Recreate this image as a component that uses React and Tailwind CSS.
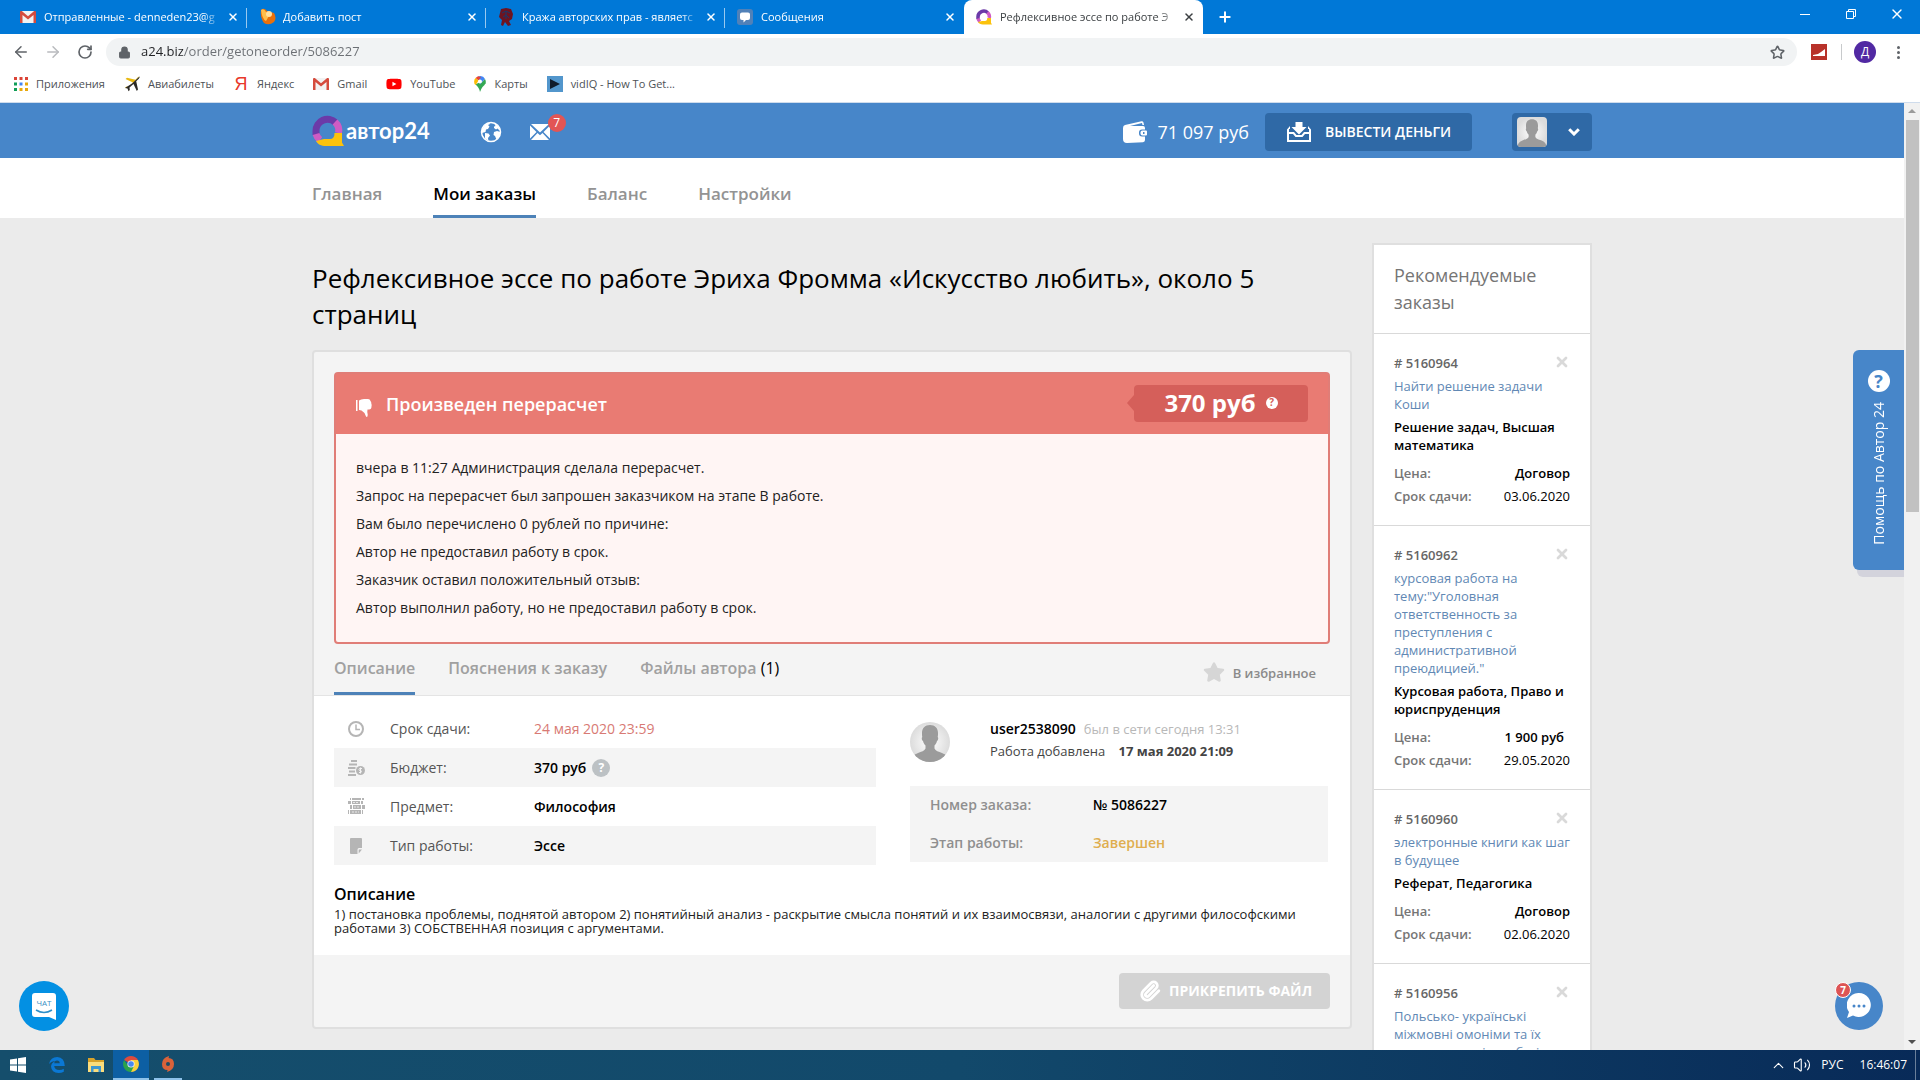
import { useState } from "react";
import { ArrowLeft, ArrowRight, RotateCw, Lock, Star, X, Plus, Paperclip, ChevronUp, Volume2 } from "lucide-react";
import { FaStar, FaYoutube } from "react-icons/fa";

/* ---------- Icons ---------- */

const Avatar = ({ className }) => (
  <svg viewBox="0 0 40 40" className={className} aria-hidden="true">
    <defs>
      <radialGradient id="avatarBg">
        <stop offset="0" stopColor="#fff" />
        <stop offset="1" stopColor="#dcdcdc" />
      </radialGradient>
    </defs>
    <rect width="40" height="40" fill="url(#avatarBg)" />
    <path fill="#9b9b9b" d="M20 3c5 0 8 3 8 8 0 2 0 3-.3 4 1 .6.6 3.500-.8 4.200-.5 2-1.400 3.300-2.400 4.300v3c1 2.500 4 3 7.500 4.500 4 1.700 6.500 3 7.500 9h-39c1-6 3.500-7.300 7.500-9 3.500-1.500 6.500-2 7.500-4.500v-3c-1-1-1.900-2.300-2.400-4.300-1.400-.7-1.800-3.600-.8-4.200-.3-1-.3-2-.3-4 0-5 3-8 8-8z" />
  </svg>
);

const LogoMark = ({ className }) => (
  <svg viewBox="0 0 32 32" className={className} aria-hidden="true">
    <path fill="none" stroke="#6b3aa8" strokeWidth="7" d="M4 20V16A11.500 11.500 0 0 1 23.500 7.500" />
    <path fill="none" stroke="#cf5cc4" strokeWidth="7" d="M23 7A11.500 11.500 0 0 1 26.500 18M4 19A12 12 0 0 0 8 25" />
    <path fill="#fbc20d" d="M22.500 18H30v9.500l2 3.500H14C9 31 5.500 29 4 26l8-2h6c3 0 4.500-2 4.500-6z" />
  </svg>
);

const GmailIcon = ({ className }) => (
  <svg viewBox="0 0 16 16" className={className} aria-hidden="true">
    <rect x="1" y="2" width="14" height="12" rx="1" fill="#f2f2f2" />
    <path fill="#d54b3d" d="M0 3q0-1 1-1h.800L8 7.200 14.200 2H15q1 0 1 1v11h-2.500V6L8 10.500 2.500 6v8H0z" />
  </svg>
);

const PlaneIcon = ({ className }) => (
  <svg viewBox="0 0 16 16" className={className} aria-hidden="true">
    <path fill="#e8b80e" d="M15.500.5L5 11 2.500 10.500 1 12l3 0L9 6.500 1.500 3 3 1.800l8.500 2L14 1z" />
    <path fill="#2c2a26" d="M15.500.5Q16 1.500 14.800 2.800L12.200 5.200 14 13.500 12.800 15 9.500 8 5.500 11.500 5.800 14 4.500 15.300 3.500 12.500 1 12 8 7.500z" />
  </svg>
);

const GlobeIcon = ({ className }) => (
  <svg viewBox="0 0 22 22" className={className} aria-hidden="true">
    <circle cx="11" cy="11" r="9.500" fill="none" stroke="currentColor" strokeWidth="1.500" />
    <path fill="currentColor" d="M2 8l3-4 4-2.500 1 1.500-2 1 1.500 1.500L8 8 6 8.500 5.500 11 2 12zM5 12l3.500.5 1.500 2-2 2.500.5 3L5 17.500zM14 2l4 3 2.500 4-1 .5-2-2-1.500 1-2-1.500V5.500l1.500-.5zM14 11l3-1 3.500 1-1 4.500-3 3-1.500-3.500L13.500 14z" />
  </svg>
);

const MailIcon = ({ className }) => (
  <svg viewBox="0 0 20 16" className={className} aria-hidden="true">
    <path fill="currentColor" d="M1 0h18l-9 8.500zM0 1.500L6.500 8 0 14.500zM20 1.500V14.500L13.500 8zM7.500 9l2.500 2.200L12.500 9 19 16H1z" />
  </svg>
);

const WalletIcon = ({ className }) => (
  <svg viewBox="0 0 24 22" className={className} aria-hidden="true">
    <path fill="currentColor" d="M2 4L18.500.2Q20 0 20.500 1.500L21 4h-1.500l-.5-2L7 5H20q2 0 2 2v1.500h-3q-3 0-3 3v1q0 3 3 3h3V19q0 2-2 2.200L4 22q-4 0-4-4V7q0-2.500 2-3z" />
    <path fill="currentColor" d="M19.500 9.500H23q1 0 1 1v3q0 1-1 1h-3.500q-2 0-2-2v-1q0-2 2-2zm.5 1.500v2h1.500v-2z" />
  </svg>
);

const WithdrawIcon = ({ className }) => (
  <svg viewBox="0 0 24 20" className={className} aria-hidden="true">
    <path fill="currentColor" d="M8.500 0h7v5h4L12 12.500 4.500 5h4zM0 7.500L3 4v3H2v3h5l2.500 3h5L17 10h5V7h-1V4l3 3.500V20H0zM2 12v6h20v-6h-4l-2.500 3h-7L6 12z" />
  </svg>
);

const ThumbDownIcon = ({ className }) => (
  <svg viewBox="0 0 16 18" className={className} aria-hidden="true">
    <path fill="currentColor" d="M0 1h1.500v11H0zM3 1.500Q5 0 8 0h4q2 0 2.500 2 1 1 .8 2.500Q16 6 15.500 7.500q0 3-2.500 3h-1.500q-.5 2 .2 5Q12 18 10.300 18 9.300 16 8.500 14 7 12.500 5.500 11.500 4.500 11 3 11z" />
  </svg>
);

const ClockIcon = ({ className }) => (
  <svg viewBox="0 0 16 16" className={className} aria-hidden="true">
    <g fill="none" stroke="currentColor">
      <circle cx="8" cy="8" r="7" strokeWidth="2" />
      <path d="M8 3.500V8.500H12" strokeWidth="1.500" />
    </g>
  </svg>
);

const CoinsIcon = ({ className }) => (
  <svg viewBox="0 0 17 16" className={className} aria-hidden="true">
    <path fill="currentColor" d="M3 0h6v2H3zM1 3.500h8v2H1zM0 7h7.500v2H0zM1 10.500h6v2H1zM0 14h8v2H0z" />
    <circle cx="12.500" cy="10.500" r="4.500" fill="currentColor" />
    <path fill="none" stroke="#f4f4f4" d="M14 8.500h-2.500q-1 1 0 2h1.500q1 1 0 2H11M12.500 7.500v6" />
  </svg>
);

const BooksIcon = ({ className }) => (
  <svg viewBox="0 0 17 17" className={className} aria-hidden="true">
    <path fill="currentColor" d="M2 0h1v2H2zM4 0h9v2H4zM14 0h2v2h-2zM0 3h3v3H0zM4 3h8v3H4zM13 3h2v3h-2zM2 7h2v4H2zM5 7h8v4H5zM14 7h3v4h-3zM0 12h1v4H0zM2 12h11v4H2zM14 12h1v4h-1z" />
    <path stroke="#fff" strokeDasharray="2 1" strokeOpacity=".7" d="M5 4.500h6M6 9h6M4 14h7" />
  </svg>
);

const NoteIcon = ({ className }) => (
  <svg viewBox="0 0 12 16" className={className} aria-hidden="true">
    <path fill="currentColor" d="M1 0h10q1 0 1 1v9H9q-1.500 0-1.500 1.500V16H1q-1 0-1-1V1q0-1 1-1zM12 11.500L8.700 15.500V12q0-.5.5-.5z" />
  </svg>
);

const QuestionDot = ({ className }) => (
  <span className={`inline-flex items-center justify-center rounded-full font-bold ${className}`}>?</span>
);

/* ---------- Data ---------- */

const browserTabs = [
  { title: "Отправленные - denneden23@g", icon: <GmailIcon className="size-4" /> },
  {
    title: "Добавить пост",
    icon: (
      <svg viewBox="0 0 18 18" className="size-[18px]">
        <path fill="#e8700c" d="M2 2q3-3 6 1l7 2q3 5 0 9-5 4-10 1-4-5-3-13z" />
        <path fill="#ffbe4a" d="M2 2q3-2 5 2l3 4-3 5q-4-2-5-11z" />
        <circle cx="10" cy="6" r="3" fill="#ffe0a0" />
      </svg>
    ),
  },
  {
    title: "Кража авторских прав - являетс",
    icon: (
      <svg viewBox="0 0 16 18" className="h-[18px] w-4">
        <path fill="#6e1420" d="M3 1l5-1 5 1 2 5-1 5-3 2 2 4-3 1-3-4-2 4-2-1 1-5-3-3z" />
        <path stroke="#173a6e" fill="none" d="M4 5l4-2 4 2M5 9l3-2 3 3M8 3v8" />
      </svg>
    ),
  },
  {
    title: "Сообщения",
    icon: (
      <svg viewBox="0 0 16 16" className="size-4">
        <rect width="16" height="16" rx="3" fill="#5181b8" />
        <path fill="#fff" d="M5 3.500h6q2 0 2 2V9q0 2-2 2H9l-2.500 2.500V11H5q-2 0-2-2V5.500q0-2 2-2z" />
      </svg>
    ),
  },
  { title: "Рефлексивное эссе по работе Э", icon: <LogoMark className="size-4" />, active: true },
];

const bookmarks = [
  {
    title: "Приложения",
    icon: (
      <svg viewBox="0 0 14 14" className="size-3.5">
        <path fill="#db4437" d="M0 0h3v3H0zM5.500 0h3v3h-3zM11 0h3v3h-3z" />
        <path fill="#0f9d58" d="M0 5.500h3v3H0zM0 11h3v3H0z" />
        <path fill="#4285f4" d="M5.500 5.500h3v3h-3z" />
        <path fill="#e8a80c" d="M11 5.500h3v3h-3zM5.500 11h3v3h-3zM11 11h3v3h-3z" />
      </svg>
    ),
  },
  { title: "Авиабилеты", icon: <PlaneIcon className="size-4" /> },
  { title: "Яндекс", icon: <span className="w-4 text-center font-['Liberation_Sans'] text-lg leading-4 text-[#e8392b]">Я</span> },
  { title: "Gmail", icon: <GmailIcon className="size-4" /> },
  { title: "YouTube", icon: <FaYoutube className="size-4 text-[#f00]" /> },
  {
    title: "Карты",
    icon: (
      <svg viewBox="0 0 12 16" className="h-4 w-3">
        <path fill="#34a853" d="M6 16Q5 11 1.500 8.500L6 6l5.500 1Q11 9 8.500 11 7 13 6 16z" />
        <path fill="#4285f4" d="M4 .5Q9-1 11 3L6 8.500z" />
        <path fill="#ea4335" d="M4 .3L1.500 2 4.500 4.500 7 1z" />
        <path fill="#fbbc04" d="M.5 8Q-.5 4 1.500 2l3 2.500L1.800 9z" />
        <path fill="#34a853" d="M11 3q1.500 3 .3 5L6 8.500z" />
        <circle cx="6" cy="5.500" r="2" fill="#fff" />
      </svg>
    ),
  },
  {
    title: "vidIQ - How To Get...",
    icon: (
      <svg viewBox="0 0 16 16" className="size-4">
        <rect width="16" height="16" fill="#5296cc" />
        <path fill="#101c2b" d="M3 3l10 5-10 5z" />
      </svg>
    ),
  },
];

const navItems = ["Главная", "Мои заказы", "Баланс", "Настройки"];

const alertLines = [
  "вчера в 11:27 Администрация сделала перерасчет.",
  "Запрос на перерасчет был запрошен заказчиком на этапе В работе.",
  "Вам было перечислено 0 рублей по причине:",
  "Автор не предоставил работу в срок.",
  "Заказчик оставил положительный отзыв:",
  "Автор выполнил работу, но не предоставил работу в срок.",
];

const recommended = [
  { id: 5160964, title: "Найти решение задачи Коши", subject: "Решение задач, Высшая математика", price: "Договор", due: "03.06.2020" },
  {
    id: 5160962,
    title: 'курсовая работа на тему:"Уголовная ответственность за преступления с административной преюдицией."',
    subject: "Курсовая работа, Право и юриспруденция",
    price: "1 900 руб",
    due: "29.05.2020",
  },
  { id: 5160960, title: "электронные книги как шаг в будущее", subject: "Реферат, Педагогика", price: "Договор", due: "02.06.2020" },
  { id: 5160956, title: "Польсько- українські міжмовні омоніми та їх застосування і в побуті", subject: "Курсовая работа, Языки", price: "Договор", due: "05.06.2020" },
];

/* ---------- Browser window ---------- */

function TabStrip() {
  return (
    <div className="flex h-[34px] shrink-0 items-stretch bg-[#0078d7] pl-2 text-[11px] text-white">
      {browserTabs.map((tab, i) => (
        <div
          key={tab.title}
          className={`relative flex w-[239px] items-center pr-1.5 pl-3 ${tab.active ? "rounded-t-lg bg-white text-[#3c4043]" : ""}`}
        >
          <span className="flex w-6 shrink-0 items-center">{tab.icon}</span>
          <span className="flex-1 overflow-hidden whitespace-nowrap [mask-image:linear-gradient(to_right,#000_90%,transparent)]">
            {tab.title}
          </span>
          <button aria-label="Закрыть вкладку" className="ml-1 flex size-4 items-center justify-center">
            <X size={12} strokeWidth={3} />
          </button>
          {!tab.active && i < 3 && <span className="absolute top-2 right-0 h-5 w-px bg-white/60" />}
        </div>
      ))}
      <button aria-label="Новая вкладка" className="ml-2.5 flex w-6 items-center justify-center">
        <Plus size={16} strokeWidth={3} />
      </button>
      <div className="ml-auto flex h-7">
        <button aria-label="Свернуть" className="flex w-[46px] items-center justify-center">
          <span className="h-px w-2.5 bg-white" />
        </button>
        <button aria-label="Восстановить" className="flex w-[46px] items-center justify-center">
          <svg viewBox="0 0 10 10" className="size-2.5" fill="none" stroke="#fff">
            <path d="M.5 2.500h7v7h-7zM2.500 2.500v-2h7v7h-2" />
          </svg>
        </button>
        <button aria-label="Закрыть" className="flex w-[46px] items-center justify-center">
          <X size={16} strokeWidth={2} />
        </button>
      </div>
    </div>
  );
}

function Toolbar() {
  return (
    <div className="flex h-9 shrink-0 items-center bg-white pr-4 pl-3 text-[#5f6368]">
      <button aria-label="Назад" className="flex w-[18px] justify-center"><ArrowLeft size={18} /></button>
      <button aria-label="Вперед" className="ml-3.5 flex w-[18px] justify-center text-[#b9bbbe]"><ArrowRight size={18} /></button>
      <button aria-label="Обновить" className="ml-3.5 flex w-[18px] justify-center"><RotateCw size={16} strokeWidth={2.5} /></button>
      <div className="ml-3 flex h-7 flex-1 items-center rounded-full bg-[#f1f3f4] px-3">
        <Lock size={13} fill="#5f6368" />
        <input
          aria-label="Адресная строка"
          defaultValue="a24.biz/order/getoneorder/5086227"
          className="ml-2.5 flex-1 bg-[linear-gradient(to_right,#202124_42px,#6b6f74_42px)] bg-clip-text text-[13px] text-transparent outline-none"
        />
        <button aria-label="Добавить в закладки"><Star size={15} strokeWidth={2.5} /></button>
      </div>
      <span className="ml-3.5 flex size-4 items-end justify-center bg-[#b8322a] pb-1">
        <svg viewBox="0 0 12 7" className="h-[7px] w-3" fill="#fff"><path d="M0 7V6l5-1 3-2 4-3v7z" /></svg>
      </span>
      <span className="ml-3.5 h-4 w-px bg-[#c8cacc]" />
      <span className="ml-3 flex size-[22px] items-center justify-center rounded-full bg-[#5129a3] text-xs text-white">Д</span>
      <button aria-label="Меню" className="ml-4 flex w-3 flex-col items-center gap-0.5">
        <span className="size-[3px] rounded-full bg-[#5f6368]" />
        <span className="size-[3px] rounded-full bg-[#5f6368]" />
        <span className="size-[3px] rounded-full bg-[#5f6368]" />
      </button>
    </div>
  );
}

function BookmarksBar() {
  return (
    <div className="flex h-[33px] shrink-0 items-center gap-[19px] border-b border-[#cfdcec] bg-white pb-1 pl-3.5 text-[11px] text-[#4d5156]">
      {bookmarks.map((b) => (
        <a key={b.title} href="#" className="flex items-center gap-2">
          {b.icon}
          <span>{b.title}</span>
        </a>
      ))}
    </div>
  );
}

function ScrollBar() {
  return (
    <div className="flex w-4 shrink-0 flex-col items-center bg-[#f1f1f1] py-1.5">
      <span className="h-0 w-0 border-x-4 border-b-4 border-x-transparent border-b-[#9a9a9a]" />
      <span className="mt-[7px] h-[392px] w-[13px] bg-[#c1c1c1]" />
      <span className="mt-auto h-0 w-0 border-x-4 border-t-4 border-x-transparent border-t-[#505050]" />
    </div>
  );
}

/* ---------- Site ---------- */

function SiteHeader() {
  return (
    <header className="bg-[#4786c9] text-white">
      <div className="mx-auto flex h-[55px] max-w-[1280px] items-center">
        <a href="#" className="flex items-center gap-0.5">
          <LogoMark className="size-8" />
          <span className="font-[Lato] text-[22px] leading-8 font-bold">автор24</span>
        </a>
        <div className="flex flex-1 items-center pt-[3px]">
          <a href="#" aria-label="Сайт" className="ml-[50px]"><GlobeIcon className="size-[22px]" /></a>
          <a href="#" aria-label="Сообщения" className="relative ml-7">
            <MailIcon className="h-4 w-5" />
            <span className="absolute -top-2.5 left-[18px] flex size-[18px] items-center justify-center rounded-full bg-[#e25555] text-xs">7</span>
          </a>
          <WalletIcon className="ml-auto h-[22px] w-6" />
          <span className="ml-2.5 text-lg">71 097 руб</span>
          <button className="ml-4 flex h-[38px] w-[207px] items-center rounded-sm bg-[#2f69a6] pl-[22px] text-sm font-semibold">
            <WithdrawIcon className="mr-3.5 h-5 w-6" />
            ВЫВЕСТИ ДЕНЬГИ
          </button>
          <button aria-label="Профиль" className="ml-10 flex h-[38px] w-20 items-center justify-between rounded-sm bg-[#2f69a6] pr-3 pl-[5px]">
            <Avatar className="size-[30px] rounded-sm" />
            <svg viewBox="0 0 12 8" className="h-2 w-3" fill="none" stroke="#fff" strokeWidth="3">
              <path d="M1.200 1.200L6 6l4.800-4.800" />
            </svg>
          </button>
        </div>
      </div>
    </header>
  );
}

function SiteNav() {
  return (
    <nav className="bg-white">
      <div className="mx-auto flex h-[60px] max-w-[1280px] gap-[51px] text-[17px] font-semibold text-[#939393]">
        {navItems.map((item) => (
          <a
            key={item}
            href="#"
            className={`flex items-center border-b-3 pt-3.5 ${item === "Мои заказы" ? "border-[#4d82b8] text-black" : "border-transparent"}`}
          >
            {item}
          </a>
        ))}
      </div>
    </nav>
  );
}

function RecalculationAlert() {
  return (
    <section className="mx-5 rounded-sm border-2 border-[#e07d77] bg-[#fff5f4]">
      <div className="flex h-[60px] items-center bg-[#e97b73] px-5 text-white">
        <ThumbDownIcon className="mt-2 h-[18px] w-4" />
        <h2 className="ml-3.5 text-lg font-semibold">Произведен перерасчет</h2>
        <div className="relative mb-0.5 ml-auto flex h-[37px] w-[174px] items-center justify-center gap-2.5 rounded-sm bg-[#d55f5a] text-2xl font-bold">
          <span className="absolute top-2.5 -left-[7px] h-0 w-0 border-y-8 border-r-[7px] border-y-transparent border-r-[#d55f5a]" />
          370 руб
          <QuestionDot className="size-3 bg-white text-[10px] text-[#d55f5a]" />
        </div>
      </div>
      <div className="p-5 text-sm leading-7 text-[#222]">
        {alertLines.map((line) => <p key={line}>{line}</p>)}
      </div>
    </section>
  );
}

function OrderTabs() {
  const [tab, setTab] = useState("desc");
  const base = "border-b-3 text-base font-semibold";
  const on = "border-[#4d82b8]";
  const off = "border-transparent";
  return (
    <div className="flex h-[52px] items-stretch border-b border-[#e4e4e4] px-5 text-[#a0a0a0]">
      <div className="flex gap-[33px]">
        <button onClick={() => setTab("desc")} className={`${base} ${tab === "desc" ? on : off}`}>Описание</button>
        <button onClick={() => setTab("notes")} className={`${base} ${tab === "notes" ? on : off}`}>Пояснения к заказу</button>
        <button onClick={() => setTab("files")} className={`${base} ${tab === "files" ? on : off}`}>
          Файлы автора <span className="font-normal text-black">(1)</span>
        </button>
      </div>
      <button className="mr-3.5 ml-auto flex items-center gap-2 pt-2 text-[13px] font-semibold text-[#8a8a8a]">
        <FaStar className="mb-1 size-[22px] text-[#d6d6d6]" />
        В избранное
      </button>
    </div>
  );
}

function OrderDetails() {
  const rows = [
    { icon: <ClockIcon className="size-4" />, label: "Срок сдачи:", value: <span className="text-[#d87a74]">24 мая 2020 23:59</span> },
    {
      icon: <CoinsIcon className="h-4 w-[17px]" />,
      label: "Бюджет:",
      value: (
        <span className="flex items-center gap-1.5 font-semibold">
          370 руб <QuestionDot className="size-[18px] bg-[#bcc1c4] text-xs text-white" />
        </span>
      ),
    },
    { icon: <BooksIcon className="size-[17px]" />, label: "Предмет:", value: <span className="font-semibold">Философия</span> },
    { icon: <NoteIcon className="ml-0.5 h-4 w-3" />, label: "Тип работы:", value: <span className="font-semibold">Эссе</span> },
  ];
  return (
    <table className="h-fit w-[542px] text-sm text-black">
      <tbody>
        {rows.map((row) => (
          <tr key={row.label} className="h-[39px] even:bg-[#f4f4f4]">
            <td className="w-14 pl-3.5 text-[#b5b5b5]">{row.icon}</td>
            <th scope="row" className="w-36 text-left font-normal text-[#555]">{row.label}</th>
            <td>{row.value}</td>
          </tr>
        ))}
      </tbody>
    </table>
  );
}

function CustomerInfo() {
  return (
    <div className="mt-3 flex-1">
      <div className="flex">
        <Avatar className="mt-px size-10 rounded-full" />
        <div className="-mt-[3px] ml-10 text-[13px] leading-[22px]">
          <p>
            <a href="#" className="text-sm font-semibold text-black">user2538090</a>
            <span className="ml-2 text-[#b8b8b8]">был в сети сегодня 13:31</span>
          </p>
          <p className="text-[#444]">
            Работа добавлена <b className="ml-2.5 font-bold">17 мая 2020 21:09</b>
          </p>
        </div>
      </div>
      <dl className="mt-6 mr-0.5 grid grid-cols-[163px_1fr] bg-[#f4f4f4] pl-5 text-sm leading-[38px] font-semibold text-[#8f8f8f]">
        <dt>Номер заказа:</dt>
        <dd className="text-black">№ 5086227</dd>
        <dt>Этап работы:</dt>
        <dd className="text-[#dfae4f]">Завершен</dd>
      </dl>
    </div>
  );
}

function OrderCard() {
  return (
    <article className="mt-[18px] rounded-sm border-2 border-[#dfdfdf] bg-[#f4f4f4] pt-5">
      <RecalculationAlert />
      <OrderTabs />
      <div className="bg-white px-5 pt-[13px] pb-5">
        <div className="flex gap-[34px]">
          <OrderDetails />
          <CustomerInfo />
        </div>
        <h3 className="mt-[17px] text-base leading-6 font-semibold text-black">Описание</h3>
        <p className="mt-px pr-5 text-[13px] leading-[14px] text-[#222]">
          1) постановка проблемы, поднятой автором 2) понятийный анализ - раскрытие смысла понятий и их взаимосвязи, аналогии с другими философскими работами 3) СОБСТВЕННАЯ позиция с аргументами.
        </p>
      </div>
      <div className="flex h-[72px] items-center justify-end px-5">
        <button className="flex h-9 w-[211px] items-center rounded-sm bg-[#d3d3d3] pl-5 text-sm font-bold text-white">
          <Paperclip size={22} strokeWidth={3} className="mr-2" />
          ПРИКРЕПИТЬ ФАЙЛ
        </button>
      </div>
    </article>
  );
}

function RecommendedOrders() {
  const [items, setItems] = useState(recommended);
  return (
    <aside className="mt-[25px] w-[220px] shrink-0 border-2 border-[#dfdfdf] bg-white text-[13px] leading-[18px]">
      <h2 className="px-5 py-[17px] text-lg leading-[27px] text-[#757575]">Рекомендуемые заказы</h2>
      {items.map((item) => (
        <div key={item.id} className="border-t border-[#d9d9d9] px-5 py-5">
          <div className="flex items-start justify-between font-semibold text-[#666]">
            # {item.id}
            <button
              aria-label="Скрыть заказ"
              onClick={() => setItems(items.filter((r) => r.id !== item.id))}
              className="text-[#d9d9d9]"
            >
              <X size={16} strokeWidth={4} />
            </button>
          </div>
          <a href="#" className="mt-[5px] block text-[#6188b4]">{item.title}</a>
          <p className="mt-[5px] font-semibold text-black">{item.subject}</p>
          <p className="mt-2.5 flex justify-between font-semibold text-[#757575]">
            Цена: <span className={`text-black ${item.price.includes("руб") ? "mr-1.5" : ""}`}>{item.price}</span>
          </p>
          <p className="mt-[5px] flex justify-between font-semibold text-[#757575]">
            Срок сдачи: <span className="font-normal text-black">{item.due}</span>
          </p>
        </div>
      ))}
    </aside>
  );
}

function FloatingWidgets() {
  return (
    <>
      <button className="absolute top-[247px] right-0 flex h-[220px] w-[51px] flex-col items-center rounded-l-md bg-[#4786c9] pt-5 text-sm text-white shadow-[4px_7px_0_#d3d3dc]">
        <QuestionDot className="size-[22px] bg-white text-lg text-[#4786c9]" />
        <span className="mt-2.5 rotate-180 whitespace-nowrap [writing-mode:vertical-rl]">Помощь по Автор 24</span>
      </button>
      <button aria-label="Чат поддержки" className="absolute bottom-[19px] left-[19px] flex size-[50px] items-center justify-center rounded-full bg-[#0390e3]">
        <svg viewBox="0 0 24 27" className="h-[27px] w-6">
          <path fill="#fff" d="M3 0h18q3 0 3 3v24l-7-3H3q-3 0-3-3V3q0-3 3-3z" />
          <path fill="none" stroke="#2e8fc9" strokeWidth="1.500" d="M4 17q8 5 16 0" />
          <text x="12" y="13" textAnchor="middle" fontSize="8" fill="#3b8fc4">ЧАТ</text>
        </svg>
      </button>
      <button aria-label="Диалоги" className="absolute right-[21px] bottom-5 flex size-12 items-center justify-center rounded-full bg-[#4786c9]">
        <svg viewBox="0 0 24 26" className="h-[26px] w-6">
          <path fill="#fff" d="M12 0a12 12 0 1 1-6 22.500L0 25l2-6A12 12 0 0 1 12 0z" />
          <g fill="#4786c9"><circle cx="7" cy="13" r="1.500" /><circle cx="12" cy="13" r="1.500" /><circle cx="17" cy="13" r="1.500" /></g>
        </svg>
        <span className="absolute top-0 left-0 flex size-4 items-center justify-center rounded-full border border-white bg-[#dd5454] text-[10px] font-bold text-white">7</span>
      </button>
    </>
  );
}

/* ---------- Desktop ---------- */

function Taskbar() {
  return (
    <footer className="flex h-[30px] shrink-0 items-center bg-[linear-gradient(to_right,#154e6c,#12496b_50%,#082a58)] text-xs text-white">
      <button aria-label="Пуск" className="flex w-9 justify-center">
        <svg viewBox="0 0 16 16" className="size-4" fill="#fff">
          <path d="M0 2.500L7 1.500V7.500H0zM8 1.300L16 0v7.500H8zM0 8.500h7v6L0 13.500zM8 8.500h8V16l-8-1.200z" />
        </svg>
      </button>
      <button aria-label="Edge" className="flex w-[42px] justify-center">
        <svg viewBox="0 0 16 16" className="size-4">
          <path fill="#0b78d4" d="M0 7Q1.500 0 8.300 0 15.500.3 15.800 9H5.200q.5 4 5 4 2.500 0 4.600-1.200v3Q12.500 16 9.500 16 2.500 15.700 2 9.500 2.300 5.500 6.500 4 2.500 4 0 7zM5.300 6.300h5.400q0-2.700-2.600-2.700T5.300 6.300z" />
        </svg>
      </button>
      <button aria-label="Проводник" className="flex w-[35px] justify-center">
        <svg viewBox="0 0 16 14" className="h-3.5 w-4">
          <path fill="#d8a22a" d="M0 0h6l1.500 2H16v3H0z" />
          <path fill="#fbdc7b" d="M0 4h16v10H0z" />
          <path fill="#3f97cf" d="M3 8h10v6h-2.500v-3h-5v3H3z" />
        </svg>
      </button>
      <button aria-label="Chrome" className="flex h-full w-9 items-center justify-center border-b-2 border-[#8ec2ea] bg-[#0d5fa3]">
        <svg viewBox="0 0 16 16" className="size-4">
          <path fill="#dd4b3e" d="M8 8L1.100 4A8 8 0 0 1 14.900 4z" />
          <path fill="#f8cf3c" d="M8 8V4h6.900A8 8 0 0 1 8 16z" />
          <path fill="#2ba24c" d="M8 8l3 2-3 6A8 8 0 0 1 1.100 4L4.500 9z" />
          <circle cx="8" cy="8" r="3.600" fill="#f1f1f1" />
          <circle cx="8" cy="8" r="2.800" fill="#4688f1" />
        </svg>
      </button>
      <button aria-label="Origin" className="ml-[5px] flex h-full w-7 items-center justify-center border-b-2 border-[#8ec2ea]">
        <svg viewBox="0 0 14 16" className="h-4 w-3.5">
          <path fill="#d9623a" d="M8 0q0 1-.5 2Q13 2 13 8q0 6-7 8 .5-1 .5-2Q1 14 1 8q0-6 7-8z" />
          <circle cx="7" cy="8" r="2" fill="#1a4b66" />
        </svg>
      </button>
      <div className="ml-auto flex items-center pr-1">
        <ChevronUp size={17} strokeWidth={1.5} />
        <Volume2 size={18} strokeWidth={1.5} className="ml-1.5" />
        <span className="ml-2.5">РУС</span>
        <time className="ml-4">16:46:07</time>
        <span className="ml-2 h-[30px] w-px bg-white/40" />
      </div>
    </footer>
  );
}

export default function App() {
  return (
    <div className="flex h-screen flex-col overflow-hidden font-['Open_Sans',sans-serif]">
      <TabStrip />
      <Toolbar />
      <BookmarksBar />
      <div className="relative flex min-h-0 flex-1 bg-[#ebebeb]">
        <div className="relative flex-1 overflow-hidden">
          <SiteHeader />
          <SiteNav />
          <div className="mx-auto flex max-w-[1280px] items-start gap-5">
            <main className="min-w-0 flex-1 pt-[42px]">
              <h1 className="text-[26px] leading-9 text-black">
                Рефлексивное эссе по работе Эриха Фромма «Искусство любить», около 5 страниц
              </h1>
              <OrderCard />
            </main>
            <RecommendedOrders />
          </div>
          <FloatingWidgets />
        </div>
        <ScrollBar />
      </div>
      <Taskbar />
    </div>
  );
}
